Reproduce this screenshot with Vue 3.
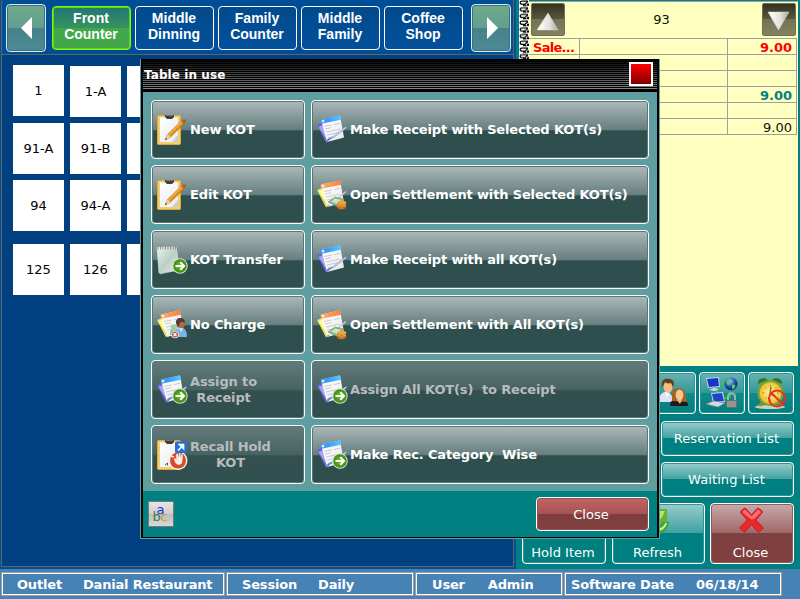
<script setup>
const tabs = [
  ['Front', 'Counter'],
  ['Middle', 'Dinning'],
  ['Family', 'Counter'],
  ['Middle', 'Family'],
  ['Coffee', 'Shop'],
]
const tableRows = [
  ['1', '1-A', ''],
  ['91-A', '91-B', ''],
  ['94', '94-A', ''],
  ['125', '126', ''],
]
const actions = [
  { left: { text: 'New KOT', icons: ['clip', 'pencil'] }, right: { text: 'Make Receipt with Selected KOT(s)', icons: ['blue', 'pen'] } },
  { left: { text: 'Edit KOT', icons: ['clip', 'pencil'] }, right: { text: 'Open Settlement with Selected KOT(s)', icons: ['orange', 'money'] } },
  { left: { text: 'KOT Transfer', icons: ['pad', 'go'] }, right: { text: 'Make Receipt with all KOT(s)', icons: ['blue', 'pen'] } },
  { left: { text: 'No Charge', icons: ['orange', 'person'] }, right: { text: 'Open Settlement with All KOT(s)', icons: ['orange', 'money'] } },
  { left: { text: 'Assign to\nReceipt', icons: ['blue', 'pen', 'go'], off: true }, right: { text: 'Assign All KOT(s)  to Receipt', icons: ['blue', 'pen', 'go'], off: true } },
  { left: { text: 'Recall Hold\nKOT', icons: ['clip', 'recall'], off: true }, right: { text: 'Make Rec. Category  Wise', icons: ['blue', 'pen', 'go'] } },
]
const bill = [
  { name: 'Sale...', amount: '9.00', tone: 'red' },
  { name: '', amount: '', tone: '' },
  { name: '', amount: '', tone: '' },
  { name: '', amount: '9.00', tone: 'teal' },
  { name: '', amount: '', tone: '' },
  { name: '', amount: '9.00', tone: 'plain' },
]
const status = [
  { label: 'Outlet', value: 'Danial Restaurant', cls: 's1' },
  { label: 'Session', value: 'Daily', cls: 's2' },
  { label: 'User', value: 'Admin', cls: 's3' },
  { label: 'Software Date', value: '06/18/14', cls: 's4' },
]
</script>

<template>
  <div class="screen">
    <svg class="sprite" width="0" height="0" aria-hidden="true">
      <defs>
        <linearGradient id="gPaper" x1="0" y1="0" x2="1" y2="1"><stop offset="0" stop-color="#fff" /><stop offset="1" stop-color="#e8eaee" /></linearGradient>
        <linearGradient id="gBlue" x1="0" x2="1"><stop offset="0" stop-color="#2f86f0" /><stop offset="1" stop-color="#5cc4ff" /></linearGradient>
        <linearGradient id="gOrange" x1="0" x2="1"><stop offset="0" stop-color="#ffae6a" /><stop offset="1" stop-color="#f9803a" /></linearGradient>
        <linearGradient id="gPad" x1="0" y1="0" x2="1" y2="1"><stop offset="0" stop-color="#f2f4f2" /><stop offset=".5" stop-color="#b9cfc6" /><stop offset="1" stop-color="#e8eeea" /></linearGradient>
        <radialGradient id="gGo"><stop offset="0" stop-color="#7cc534" /><stop offset="1" stop-color="#358a10" /></radialGradient>
        <linearGradient id="gArrow" x1="0" x2="1"><stop offset="0" stop-color="#fff" /><stop offset=".6" stop-color="#e2e2dc" /><stop offset="1" stop-color="#a8a8a0" /></linearGradient>
        <radialGradient id="gGlobe" cx=".4" cy=".3"><stop offset="0" stop-color="#8fd0ff" /><stop offset="1" stop-color="#073a9a" /></radialGradient>
        <radialGradient id="gClock"><stop offset="0" stop-color="#fff6a0" /><stop offset="1" stop-color="#f0c030" /></radialGradient>
        <pattern id="coil" width="10" height="6.700" patternUnits="userSpaceOnUse">
          <rect width="10" height="6.700" fill="#fff" />
          <path d="M9 1H3.500C.4 1 .4 4.200 3.500 4.200H6M9 1.500L5.500 4.500M7.500 5.500H4" fill="none" stroke="#000" stroke-width="1.200" />
          <path d="M8 3.500h2v2.200H8z" fill="#000" />
        </pattern>
      </defs>
      <symbol id="clip" viewBox="0 0 32 32">
        <rect x="1.500" y="1.500" width="23" height="29" rx="1" fill="#f5cf6c" stroke="#dfa742" />
        <path d="M4 3.500h18V28H4z" fill="url(#gPaper)" />
        <path d="M16 28l6-7v7z" fill="#c9ccd0" />
        <path d="M9 1h9v2l-2 2h-5L9 3z" fill="#3c3e42" />
        <path d="M10 1h7v1h-7z" fill="#777" />
      </symbol>
      <symbol id="pencil" viewBox="0 0 32 32">
        <path d="M9 26l2.500-5.500L25.500 7l2.500 2.700L14.500 23z" fill="#e08f1e" stroke="#9d5c12" stroke-width=".6" />
        <path d="M12 20.500L25.500 7.300l1 1L13 21.500z" fill="#f7b345" />
        <path d="M25.500 7l2-1.500c1.500-.9 3.200.6 2.500 2l-2 2.200z" fill="#b0622a" />
        <path d="M9 26l2.500-5.500 3 2.500z" fill="#f3d5a4" /><path d="M9 26l1-2 1 1z" fill="#333" />
      </symbol>
      <symbol id="blue" viewBox="0 0 32 32">
        <path d="M1 11l9-4 3 17-3 4.500z" fill="#6a66d8" /><path d="M2.500 13l5-2 3 14z" fill="#a9a5f4" />
        <path d="M5 5.500l19-4L28 23.500 11 28z" fill="url(#gPaper)" />
        <path d="M4.500 5.600L24 1.300l1 4.500L5.500 9.800z" fill="url(#gBlue)" />
        <circle cx="7" cy="7" r="1.500" fill="#cfe9ff" />
        <path d="M8 12.500l8-1.600m2-.4l6-1.300M9 15l6-1.300M10 18l14-3M11 21l13-2.800M12 24l6-1.400" stroke="#b9bec6" stroke-width=".8" />
      </symbol>
      <symbol id="orange" viewBox="0 0 32 32">
        <path d="M1 11l9-4 3 17-3 4.500z" fill="#e8de5c" /><path d="M2.500 12l5-2 3 14z" fill="#ffffa0" />
        <path d="M5 5.500l19-4L28 23.500 11 28z" fill="url(#gPaper)" />
        <path d="M4.500 5.600L24 1.300l1 4.500L5.500 9.800z" fill="url(#gOrange)" />
        <circle cx="7" cy="7" r="1.500" fill="#ffe7cf" />
        <path d="M8 12.500l8-1.600m2-.4l6-1.300M9 15l6-1.300M10 18l14-3M11 21l10-2" stroke="#c4c0bb" stroke-width=".8" />
      </symbol>
      <symbol id="pen" viewBox="0 0 32 32">
        <path d="M14 25l3-2.500L29 13l1.800-.5-.8 1.700L18 23.500z" fill="#d5daea" stroke="#7584b8" stroke-width=".5" />
        <path d="M10 28.500l1.500-3.500L17 22.500l-4 4z" fill="#5672dd" />
      </symbol>
      <symbol id="money" viewBox="0 0 32 32">
        <path d="M22 18l7.500-6 1 1-7 6z" fill="#c8cac4" />
        <path d="M12 23l7-5 9 2-6 8z" fill="#86b58c" stroke="#5f9168" stroke-width=".5" />
        <path d="M15 22.500l4-3 6 1.500-4 4z" fill="#cfe6c5" />
        <path d="M21 24h9v4.500c-2 2.500-7 2.500-9 0z" fill="#c8721c" /><path d="M21.300 26.300q4 2 8.500 0" fill="none" stroke="#f0b052" /><ellipse cx="25.700" cy="23.800" rx="4.600" ry="2" fill="#eba640" />
        <path d="M10 28.500l2-3 2 1z" fill="#e4a440" />
      </symbol>
      <symbol id="pad" viewBox="0 0 32 32">
        <path d="M1.500 3L20 1.500 24.500 26 4 30.500z" fill="#a0a8a5" />
        <path d="M1 3h19l3.500 23L3 29z" fill="url(#gPad)" stroke="#d8dcda" stroke-width=".7" />
        <path d="M2 1.500v4m2.500-4v4M7 1.500v4m2.500-4v4M12 1.500v4m2.500-4v4M17 1.500v4m2.500-4v4" stroke="#787d7c" stroke-width=".8" />
      </symbol>
      <symbol id="go" viewBox="0 0 32 32">
        <circle cx="24" cy="22" r="7.700" fill="#d5dfcd" /><circle cx="24" cy="22" r="6.700" fill="url(#gGo)" />
        <path d="M19.500 22h8M24.300 18.300L28 22l-3.700 3.700" fill="none" stroke="#fff" stroke-width="2" />
      </symbol>
      <symbol id="person" viewBox="0 0 32 32">
        <path d="M14 26c0-5 2-7 5-7s4 2 4 7z" fill="#74b587" /><circle cx="18" cy="18.500" r="3.200" fill="#9bd0a4" />
        <path d="M18 28c0-7 3-9 7-9s6 3 6 9z" fill="#7fb3e4" /><path d="M23 19l2 4 2-4z" fill="#e8f2fb" />
        <ellipse cx="25" cy="14.500" rx="4" ry="5" fill="#a76c42" /><path d="M20 14c-1-6 9-7 9 0-3-2-5-2-6 2l-1 3z" fill="#553b31" />
        <circle cx="19" cy="25.500" r="3.800" fill="#eee" /><circle cx="19" cy="25.500" r="3" fill="#c84343" /><path d="M17.500 24l3 3m0-3l-3 3" stroke="#fff" stroke-width="1.200" />
      </symbol>
      <symbol id="recall" viewBox="0 0 32 32">
        <circle cx="22" cy="21.500" r="9.500" fill="#eee" /><circle cx="22" cy="21.500" r="8" fill="#d94b25" />
        <path d="M18 19.500l1.200-.6 1 1.500V15l1.500-.5.6 4 .6-4.500 1.500.3v4.500l1-3.500 1.400.5-.4 6c-.3 3-1.500 4-3.500 4-2.500 0-4-1.500-5-6.300z" fill="#f5ebe6" />
        <path d="M15 17l3 1" stroke="#f5ebe6" stroke-width="1.500" />
        <path d="M9 26l2.500-2v2.500" fill="none" stroke="#333" stroke-width=".8" />
        <rect x="19" y="2.500" width="11.500" height="11.500" rx="1.500" fill="#2273d8" />
        <path d="M22 11.500l4.500-4.500M23.500 5.500h4v4z" fill="#fff" stroke="#fff" stroke-width="1.700" />
      </symbol>
    </svg>

    <div class="main">
      <section class="floor">
        <header class="tabs">
          <div class="nav"><svg width="38" height="46"><path d="M14 23L25 12v22z" fill="#fff" /></svg></div>
          <div class="tablist">
            <div v-for="(t, i) in tabs" :key="i" class="tab" :class="{ active: i === 0 }"><span>{{ t[0] }}</span><span>{{ t[1] }}</span></div>
          </div>
          <div class="nav"><svg width="38" height="46"><path d="M15 12l11 11-11 11z" fill="#fff" /></svg></div>
        </header>
        <div class="tables">
          <div v-for="(r, i) in tableRows" :key="i" class="trow" :class="{ first: i === 0, last: i === 3 }">
            <div v-for="(c, j) in r" :key="j" class="cell">{{ c }}</div>
          </div>
        </div>
      </section>

      <section class="side">
        <div class="receipt">
          <svg class="coil" width="10" height="365"><rect width="10" height="365" fill="url(#coil)" /></svg>
          <div class="bill">
            <div class="billhead">
              <div class="sq"><svg width="33" height="33"><path d="M17 10L27 27H6z" fill="url(#gArrow)" stroke="#ddd" stroke-width=".5" /></svg></div>
              <span class="num">93</span>
              <div class="sq"><svg width="33" height="33"><path d="M6 9h21L16.500 27z" fill="url(#gArrow)" stroke="#ddd" stroke-width=".5" /></svg></div>
            </div>
            <div v-for="(b, i) in bill" :key="i" class="brow" :class="b.tone"><span>{{ b.name }}</span><span></span><span>{{ b.amount }}</span></div>
          </div>
        </div>
        <div class="controls">
          <div class="minis">
            <div class="tbtn mini">
              <svg width="32" height="32" viewBox="0 0 32 32">
                <path d="M2 25c0-8 3-10 7-10s7 3 7 10z" fill="#dde1f4" /><path d="M8 15l2 6 2-6z" fill="#fff" /><ellipse cx="11" cy="10" rx="4.500" ry="6" fill="#f3bd83" /><path d="M5 11C3 2 9 1 12 2c5 0 6 5 4 8l-2-4c-3 1-5 0-6-1z" fill="#6a3d14" />
                <path d="M13 29c0-5 2-6 8-7 7 1 10 2 10 7z" fill="#1d1a1c" /><path d="M15 24c0-9-1-13 7-13 7 0 6 7 8 14z" fill="#a5661d" /><ellipse cx="22.500" cy="18" rx="3.800" ry="5.500" fill="#f5c893" /><path d="M20 23h5l-2 4z" fill="#f1b77c" />
              </svg>
            </div>
            <div class="tbtn mini">
              <svg width="34" height="34" viewBox="0 0 34 34">
                <path d="M14 8h9M25 14v8M12 18v-4M16 22h7" stroke="#28d528" stroke-width="1.500" />
                <path d="M1 2l13-1 1 10-12 1z" fill="#c9d2e2" /><path d="M2 3l11-1 1 8-10 1z" fill="#1237c8" /><path d="M4 14l5-2 5 1-4 2z" fill="#d5dbe3" />
                <circle cx="26" cy="8" r="6.500" fill="url(#gGlobe)" /><path d="M22 5c3-4 4 1 3 3s-4 0-3-3m5 4c5-2 4 4 0 4z" fill="#6ec45e" />
                <path d="M6 17l12-1 2 10-12 1z" fill="#c9d2e2" /><path d="M7 18l10-1 2 8-10 1z" fill="#1c45c8" /><path d="M1 28l8-3 11 2-7 4z" fill="#d5dbe3" stroke="#7f8795" stroke-width=".6" />
                <path d="M23 25v-4c0-5 7-5 7 0v4" fill="none" stroke="#a7afb0" stroke-width="2" /><rect x="21" y="24" width="11" height="8" rx="1" fill="#64706f" /><path d="M22 26h9m-9 2h9m-9 2h9" stroke="#b8c0bf" />
              </svg>
            </div>
            <div class="tbtn mini">
              <svg width="36" height="36" viewBox="0 0 36 36">
                <ellipse cx="17" cy="32" rx="15" ry="2" fill="#c9d0c4" /><path d="M6 31l5-5m18 5l-5-5" stroke="#a8861e" stroke-width="3" />
                <path d="M5 9c-1-5 6-8 10-4zm24 0c1-5-6-8-10-4z" fill="#38751e" /><circle cx="17.500" cy="18" r="13" fill="#7ea42c" /><circle cx="17.500" cy="18" r="10.800" fill="url(#gClock)" />
                <path d="M17.500 10v1.500m0 13V26m-8-8H11m13 0h1.500M12 12.500l1 1m10-1l-1 1m-10 10l1-1" stroke="#8d7724" /><path d="M18 12l-1 7 5 2" fill="none" stroke="#8f6e28" stroke-width="1.500" />
                <circle cx="24" cy="23.500" r="8" fill="none" stroke="#e83024" stroke-width="2" /><path d="M18.500 18l11 11" stroke="#e83024" stroke-width="2" />
              </svg>
            </div>
          </div>
          <div class="tbtn wide">Reservation List</div>
          <div class="tbtn wide">Waiting List</div>
          <div class="bigs">
            <div class="tbtn big hold"><svg width="32" height="32"><circle cx="15" cy="22" r="8" fill="#7d8790" /></svg><span>Hold Item</span></div>
            <div class="tbtn big refresh"><svg width="34" height="34"><path d="M7 5h19v13H13z" fill="#66b13c" /><path d="M11 7h13l-4 8H11z" fill="#b9e36c" /><path d="M5 19c2 7 11 8 16 0l-3-1h10c-2 14-18 17-22 9z" fill="#39a72e" /><path d="M16 25c5-1 8-4 8-6l2 0c-1 5-6 9-11 8z" fill="#c6f1a0" /></svg><span>Refresh</span></div>
            <div class="tbtn big bigclose"><svg width="32" height="32"><path d="M5 7l3-2.500q1-1 2 0L15.500 11 21 4.500q1-1 2 0l3 2.500q1 1 0 2l-6 7 6.500 7q1 1 0 2l-3 2.500q-1 1-2 0l-6-7-6 7q-1 1-2 0l-3-2.500q-1-1 0-2l6.500-7-6-7q-1-1 0-2z" fill="#e8282c" stroke="#b51620" stroke-width=".8" /><path d="M6 8l3-2.500 6.500 7L22 5.500l3 2.500-6.500 6.500-3 1z" fill="#ff7070" /></svg><span>Close</span></div>
          </div>
        </div>
      </section>
    </div>

    <footer class="status">
      <div v-for="s in status" :key="s.label" class="stat" :class="s.cls"><span>{{ s.label }}</span><span>{{ s.value }}</span></div>
    </footer>

    <div class="modal">
      <div class="title"><span>Table in use</span><i class="x"></i></div>
      <div class="body">
        <template v-for="(a, i) in actions" :key="i">
          <div v-for="b in [a.left, a.right]" :key="b.text" class="act" :class="{ off: b.off }">
            <svg width="32" height="32"><use v-for="n in b.icons" :key="n" :href="'#' + n" width="32" height="32" /></svg>
            <span>{{ b.text }}</span>
          </div>
        </template>
      </div>
      <div class="foot">
        <svg class="abc" width="26" height="26" viewBox="0 0 26 26">
          <defs><linearGradient id="gKey" x1="0" y1="0" x2="0" y2="1"><stop offset="0" stop-color="#e6e6e6" /><stop offset=".49" stop-color="#cecece" /><stop offset=".5" stop-color="#bcbcbc" /><stop offset="1" stop-color="#dadada" /></linearGradient></defs>
          <rect x=".5" y=".5" width="25" height="25" fill="url(#gKey)" stroke="#777" />
          <text x="8.500" y="12.500" fill="#2030d8">a</text><text x="4.500" y="20" fill="#3f803f">b</text><text x="12.500" y="20" fill="#cda41c">c</text>
        </svg>
        <div class="mclose">Close</div>
      </div>
    </div>
  </div>
</template>

<style>
body { margin: 0; overflow: hidden; }
</style>

<style scoped>
* { box-sizing: border-box; }
.screen { position: relative; width: 800px; height: 599px; overflow: hidden; display: flex; flex-direction: column; background: #4682b4; font-family: "DejaVu Sans", Verdana, sans-serif; font-size: 13px; color: #fff; }
.sprite { position: absolute; }
.main { display: flex; height: 569px; background: #008080; }
.floor { width: 516px; height: 569px; background: #004f96; padding: 0 2px 2px 1px; }
.tabs { height: 55px; display: flex; align-items: flex-start; justify-content: space-between; padding: 4px 2px 0 4px; border: 1px solid #646464; border-top: 0; }
.nav { width: 40px; height: 48px; border: 1px solid #dbe8ef; border-radius: 4px; background: linear-gradient(#6faa8a, #639e91 49%, #47828a 50%, #4c8a96); box-shadow: inset 0 0 0 1px #37708a; }
.nav svg { display: block; }
.tablist { display: flex; gap: 4px; padding: 2px 0 0; margin-right: 2px; }
.tab { width: 79px; height: 44px; border: 1px solid #fff; border-radius: 4px; background: linear-gradient(#004a8c, #05509b); display: flex; flex-direction: column; align-items: center; padding: 3px 1px 0 0; font: bold 14px/16px "Liberation Sans", Arial, sans-serif; }
.tab.active { border-color: #7dfc00; box-shadow: inset 0 0 0 1px #62cf22; background: linear-gradient(#1f7774, #37925e 49%, #43a84b 50%, #42a44a); }
.tables { height: 512px; border: 1px solid #646464; border-top: 0; background: #004080; padding: 10px 0 0 11px; overflow: hidden; }
.trow { display: flex; gap: 6px; margin-bottom: 6px; }
.trow.first { margin-bottom: 7px; }
.trow.first .cell:not(:first-child) { margin-top: 1px; margin-bottom: -1px; }
.trow.last { margin-top: 13px; }
.cell { width: 51px; height: 51px; background: #fff; color: #000; display: flex; align-items: center; justify-content: center; padding-bottom: 1px; }
.side { width: 284px; display: flex; flex-direction: column; padding-left: 3px; }
.receipt { display: flex; height: 366px; }
.coil { display: block; flex: none; width: 10px; }
.bill { width: 269px; background: #ffffc0; border: 1px solid #a0a0a0; border-bottom: 0; margin-top: 1px; border-left: 0; border-right-color: #ffffc0; }
.billhead { height: 37px; display: flex; align-items: flex-start; justify-content: space-between; padding: 1px 1px 0 2px; border-bottom: 1px solid #a0a0a0; color: #111; }
.num { line-height: 33px; padding-right: 4px; }
.sq { width: 34px; height: 33px; border-radius: 2px; border: 1px solid #706f50; background: linear-gradient(#343324, #58573e 49%, #747353 50%, #828261); }
.sq svg { display: block; margin: -1px; }
.brow { display: grid; grid-template-columns: 51px 148px 69px; height: 16px; border-bottom: 1px solid #a0a0a0; color: #111; line-height: 17px; }
.brow span { border-right: 1px solid #a0a0a0; height: 16px; }
.brow span:first-child { padding-left: 4px; letter-spacing: -.7px; }
.brow span:last-child { text-align: right; padding-right: 4px; }
.brow.red { color: #ff0000; font-weight: bold; }
.brow.teal { color: #008080; font-weight: bold; }
.controls { padding: 6px 6px 0 0; display: flex; flex-direction: column; align-items: flex-end; gap: 6px; }
.tbtn { border: 1px solid #fff; border-radius: 4px; background: linear-gradient(#98cccc, #42a1a1 49%, #008080 50%, #008080); box-shadow: inset 0 0 0 1px #2f9494; display: flex; align-items: center; justify-content: center; }
.minis { display: flex; gap: 3px; height: 42px; margin-bottom: 1px; }
.mini { width: 46px; height: 42px; background: linear-gradient(#68b3b3, #329898 49%, #128989 50%, #008080); }
.wide { width: 133px; height: 35px; letter-spacing: .1px; padding-right: 2px; }
.bigs { display: flex; gap: 6px; }
.big { height: 61px; flex-direction: column; justify-content: flex-start; padding-right: 2px; }
.big svg { flex: none; }
.big span { line-height: 16px; margin-top: 9px; }
.hold { width: 84px; }
.refresh { width: 93px; }
.refresh span { margin-top: 7px; }
.bigclose { width: 84px; margin-left: -1px; background: linear-gradient(#caaaaa, #a06767 49%, #804040 50%, #804040); box-shadow: inset 0 0 0 1px #925c5c; padding-right: 0; }
.bigclose span { padding-right: 3px; }
.status { display: flex; gap: 1px; padding: 3px 0 0 1px; height: 30px; }
.stat { height: 24px; border: 1px solid #a0a0a0; box-shadow: inset 0 0 0 1px #fff; display: flex; align-items: center; font-weight: bold; padding-left: 15px; white-space: pre; letter-spacing: -.18px; }
.s1 { width: 224px; gap: 21px; }
.s2 { width: 188px; gap: 21px; }
.s3 { width: 148px; gap: 23px; padding-left: 16px; }
.s4 { width: 218px; gap: 22px; padding-left: 6px; }
.modal { position: absolute; left: 140px; top: 59px; width: 520px; height: 480px; border: 1px solid #5f9ea0; border-top: 0; background: #000; padding: 0 2px 2px; }
.title { height: 33px; display: flex; justify-content: space-between; padding: 3px 4px 0 1px; background: linear-gradient(#000, rgba(0,0,0,.45) 50%, rgba(0,0,0,.05) 95%, #000 95%), repeating-linear-gradient(#000 0 1px, #909090 1px 2px); font: bold 12px/27px "DejaVu Sans", sans-serif; letter-spacing: .08px; }
.x { width: 24px; height: 24px; border: 2px solid #fff; background: linear-gradient(#ff0000, #800000); }
.body { height: 399px; background: #5f9ea0; padding: 8px 9px 0 8px; display: grid; grid-template-columns: 154px 338px; grid-auto-rows: 59px; gap: 6px; }
.act { border: 1px solid #fff; border-radius: 4px; display: flex; align-items: center; padding-left: 4px; background: linear-gradient(#acb9b9, #657e7e 51%, #2f4f4f 52%, #2f4f4f); box-shadow: inset 0 0 0 1px #5d7575; font-weight: bold; line-height: 16px; letter-spacing: -.14px; }
.act svg { flex: none; }
.act span { margin-left: 2px; white-space: pre; text-align: center; }
.act.off { background: linear-gradient(#647b7b, #456262 51%, #34504f 52%, #2f4f4f); color: #b9bcbc; }
.foot { height: 46px; background: #008080; display: flex; justify-content: space-between; padding: 6px 8px 0 5px; }
.abc { margin-top: 4px; font: 13px "DejaVu Sans", sans-serif; }
.mclose { width: 113px; height: 34px; border: 1px solid #fff; border-radius: 4px; background: linear-gradient(#c26464, #a85353 49%, #7d3e3e 50%, #804040); box-shadow: inset 0 0 0 1px #96514e; font-size: 13px; line-height: 33px; padding-right: 3px; text-align: center; }
</style>
